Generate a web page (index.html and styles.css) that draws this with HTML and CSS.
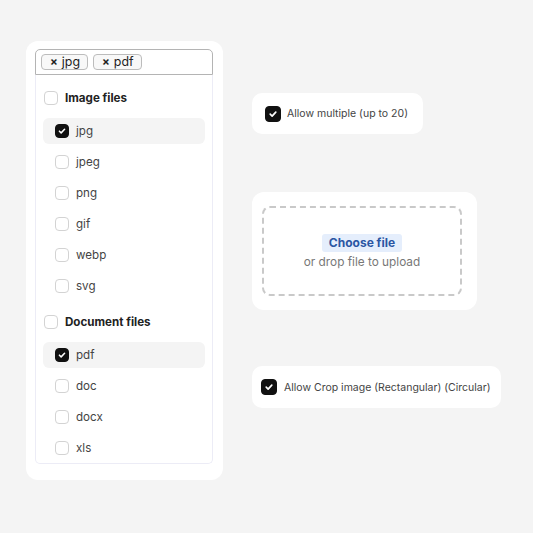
FILE: index.html
```html
<!DOCTYPE html>
<html>
<head>
<meta charset="utf-8">
<link rel="stylesheet" href="styles.css">
</head>
<body>
<div class="page">
  <div class="card picker">
    <div class="select">
      <div class="tags">
        <span class="tag"><b>×</b> jpg</span>
        <span class="tag"><b>×</b> pdf</span>
      </div>
      <div class="list">
        <div class="group">
          <div class="row header"><span class="cb"></span>Image files</div>
          <div class="row item active"><span class="cb on"><svg viewBox="0 0 14 14"><path d="M4 7.2l2 2 4-4.2" fill="none" stroke="#fff" stroke-width="1.8" stroke-linecap="round" stroke-linejoin="round"/></svg></span>jpg</div>
          <div class="row item"><span class="cb"></span>jpeg</div>
          <div class="row item"><span class="cb"></span>png</div>
          <div class="row item"><span class="cb"></span>gif</div>
          <div class="row item"><span class="cb"></span>webp</div>
          <div class="row item"><span class="cb"></span>svg</div>
        </div>
        <div class="group second">
          <div class="row header"><span class="cb"></span>Document files</div>
          <div class="row item active"><span class="cb on"><svg viewBox="0 0 14 14"><path d="M4 7.2l2 2 4-4.2" fill="none" stroke="#fff" stroke-width="1.8" stroke-linecap="round" stroke-linejoin="round"/></svg></span>pdf</div>
          <div class="row item"><span class="cb"></span>doc</div>
          <div class="row item"><span class="cb"></span>docx</div>
          <div class="row item last"><span class="cb"></span>xls</div>
        </div>
      </div>
    </div>
  </div>
  <div class="side">
    <div class="card opt multiple">
      <span class="cb big on"><svg viewBox="0 0 16 16"><path d="M4.8 8.2l2.2 2.2 4.2-4.6" fill="none" stroke="#fff" stroke-width="1.9" stroke-linecap="round" stroke-linejoin="round"/></svg></span>
      <span class="opt-text">Allow multiple (up to 20)</span>
    </div>
    <div class="card upload">
      <div class="drop">
        <span class="choose">Choose file</span>
        <span class="hint">or drop file to upload</span>
      </div>
    </div>
    <div class="card opt crop">
      <span class="cb big on"><svg viewBox="0 0 16 16"><path d="M4.8 8.2l2.2 2.2 4.2-4.6" fill="none" stroke="#fff" stroke-width="1.9" stroke-linecap="round" stroke-linejoin="round"/></svg></span>
      <span class="opt-text">Allow Crop image (Rectangular) (Circular)</span>
    </div>
  </div>
</div>
</body>
</html>
```
FILE: styles.css
```css
* { box-sizing: border-box; }
html, body { margin: 0; padding: 0; }
body {
  background: #f4f4f4;
  font-family: Inter, "Noto Sans", sans-serif;
  width: 533px;
  height: 533px;
  overflow: hidden;
}
.page {
  display: flex;
  align-items: flex-start;
  gap: 29px;
  padding: 41px 0 0 26px;
}
.card {
  background: #fff;
  border-radius: 12px;
}
.picker {
  width: 197px;
  height: 439px;
  padding: 8px 10px 16px 9px;
}
.select {
  display: flex;
  flex-direction: column;
  height: 100%;
}
.tags {
  height: 26px;
  border: 1px solid #b4b4b4;
  border-radius: 5px 5px 0 0;
  display: flex;
  gap: 5px;
  padding: 4px 0 0 5px;
}
.tag {
  height: 16px;
  border: 1px solid #bcbcbc;
  border-radius: 4px;
  background: #f8f8f8;
  font-size: 12.4px;
  line-height: 14px;
  color: #222;
  padding: 0 7px 0 8px;
  display: flex;
  align-items: center;
  gap: 4px;
}
.tag b { font-size: 11.5px; font-weight: 700; }
.list {
  flex: 1;
  border: 1px solid #ececf6;
  border-top: none;
  border-radius: 0 0 5px 5px;
  padding: 10px 7px 0 7px;
  overflow: hidden;
}
.row {
  height: 26px;
  display: flex;
  align-items: center;
  font-size: 11.6px;
  border-radius: 6px;
}
.header {
  font-weight: 700;
  color: #222;
  padding-left: 1px;
  gap: 7px;
  margin-bottom: 7px;
}
.item {
  color: #444;
  padding-left: 12px;
  gap: 7px;
  margin-bottom: 5px;
}
.item.active { background: #f4f4f4; }
.group.second { padding-top: 5px; }
.cb {
  width: 14px;
  height: 14px;
  border: 1px solid #d3d3d3;
  border-radius: 4px;
  background: #fff;
  flex: none;
  display: flex;
}
.cb svg { width: 100%; height: 100%; display: block; }
.cb.on { background: #111; border-color: #111; }
.cb.big { width: 16px; height: 16px; border-radius: 4px; }
.side {
  display: flex;
  flex-direction: column;
  align-items: flex-start;
  padding-top: 52px;
}
.opt {
  display: flex;
  align-items: center;
  border-radius: 10px;
}
.opt-text { font-size: 10.5px; color: #444; }
.multiple {
  width: 171px;
  height: 41px;
  padding-left: 13px;
  gap: 6px;
}
.upload {
  margin-top: 58px;
  width: 225px;
  height: 118px;
  padding: 14px 15px 14px 10px;
}
.drop {
  height: 100%;
  border: 2px dashed #c9c9c9;
  border-radius: 8px;
  display: flex;
  flex-direction: column;
  align-items: center;
  justify-content: center;
  padding-top: 2px;
}
.choose {
  background: #e5eefc;
  color: #2b56a3;
  font-weight: 700;
  font-size: 12px;
  line-height: 18px;
  height: 18px;
  padding: 0 7px;
  border-radius: 3px;
}
.hint {
  color: #777;
  font-size: 11.8px;
  line-height: 16px;
  margin-top: 2px;
}
.crop {
  margin-top: 56px;
  width: 249px;
  height: 42px;
  padding-left: 9px;
  gap: 7px;
}
```
